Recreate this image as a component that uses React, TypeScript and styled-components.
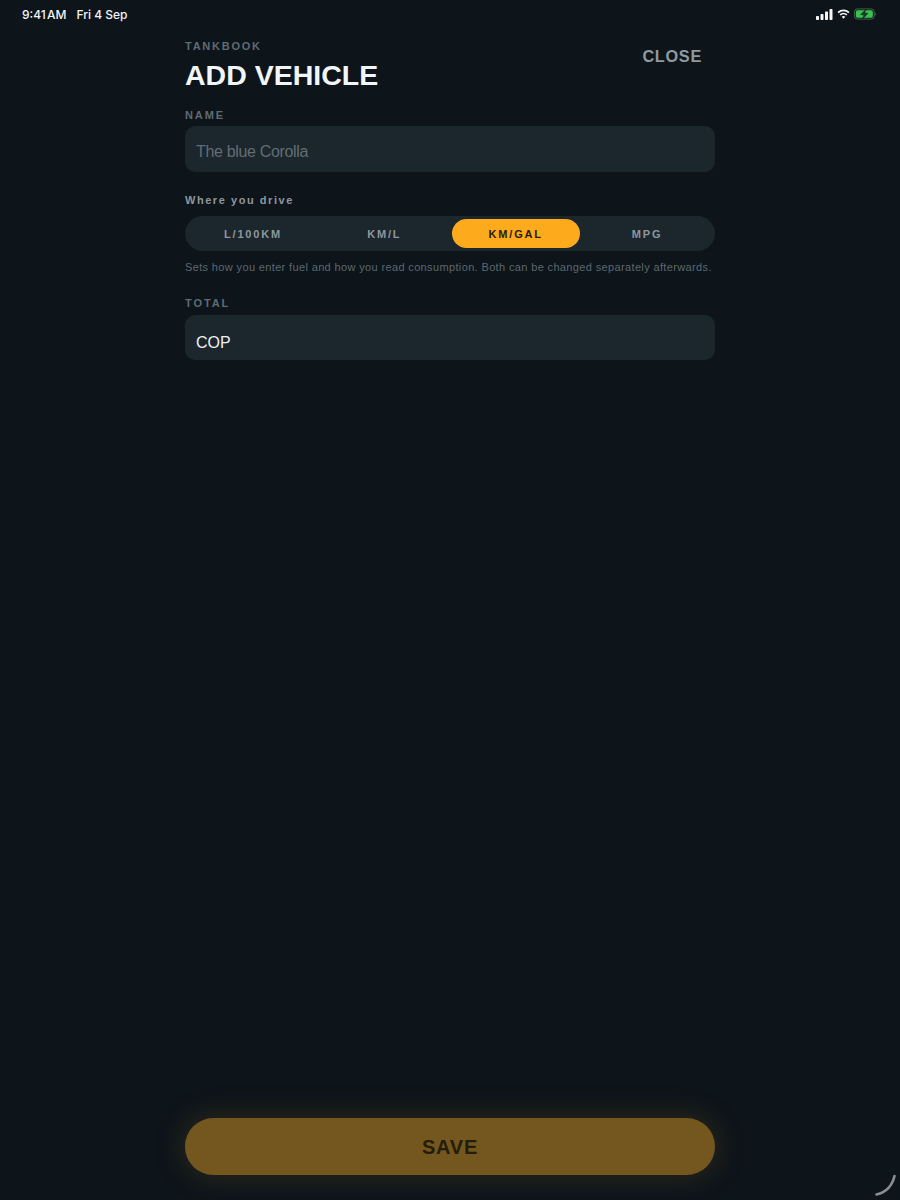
import React from "react";
import styled, { createGlobalStyle } from "styled-components";

const GlobalStyle = createGlobalStyle`
  html, body {
    margin: 0;
    padding: 0;
    background: #0d141a;
  }
  * {
    box-sizing: border-box;
  }
`;

const Page = styled.div`
  position: relative;
  display: flex;
  flex-direction: column;
  height: 1200px;
  overflow: hidden;
  background: #0d141a;
  font-family: "Liberation Sans", Arial, sans-serif;
`;

const StatusBar = styled.div`
  display: flex;
  justify-content: space-between;
  align-items: center;
  height: 28px;
  padding: 0 23px 0 22px;
  color: #f2f4f5;
  font-family: Inter, sans-serif;
  font-size: 12px;
  font-weight: 500;
`;

const StatusLeft = styled.div`
  display: flex;
  gap: 10px;
`;

const Clock = styled.span`
  word-spacing: -2px;
`;

const StatusRight = styled.div`
  display: flex;
  align-items: center;
  gap: 4px;
`;

const Sheet = styled.main`
  display: flex;
  flex-direction: column;
  flex: 1;
  width: 530px;
  margin: 0 auto;
`;

const Header = styled.header`
  display: flex;
  justify-content: space-between;
  align-items: flex-start;
  padding-top: 12px;
`;

const Eyebrow = styled.div`
  color: #5f6b72;
  font-size: 11px;
  font-weight: 700;
  letter-spacing: 1.75px;
  line-height: 13px;
`;

const Title = styled.h1`
  margin: 5px 0 0;
  color: #f1f6f9;
  font-size: 28.5px;
  font-weight: 700;
  line-height: 34px;
`;

const CloseButton = styled.button`
  margin: 6px 13px 0 0;
  padding: 0;
  border: 0;
  background: none;
  color: #8f9a9f;
  font-family: inherit;
  font-size: 16.3px;
  font-weight: 700;
  letter-spacing: 0.7px;
  line-height: 20px;
`;

const FieldLabel = styled.label<{ $top: number; $gap: number }>`
  display: block;
  margin: ${(p) => p.$top}px 0 ${(p) => p.$gap}px;
  color: #5f6b72;
  font-size: 11px;
  font-weight: 700;
  letter-spacing: 1.9px;
  line-height: 13px;
`;

const Field = styled.div<{ $height: number; $drop: number }>`
  display: flex;
  align-items: center;
  height: ${(p) => p.$height}px;
  padding: ${(p) => p.$drop}px 11px 0;
  border-radius: 10px;
  background: #1c262d;
`;

const FieldText = styled.span<{ $filled?: boolean }>`
  color: ${(p) => (p.$filled ? "#eef2f4" : "#626d74")};
  font-size: 16px;
  letter-spacing: ${(p) => (p.$filled ? "0" : "-0.33px")};
  line-height: 20px;
`;

const SectionLabel = styled.div`
  margin: 22px 0 9px;
  color: #8f979b;
  font-size: 11px;
  font-weight: 700;
  letter-spacing: 1.55px;
  line-height: 13px;
`;

const Segments = styled.div`
  display: grid;
  grid-template-columns: repeat(4, 1fr);
  gap: 3.5px;
  height: 35px;
  padding: 3px 4px;
  border-radius: 18px;
  background: #1c262d;
`;

const Segment = styled.button<{ $active?: boolean }>`
  padding: 0;
  border: 0;
  border-radius: 15px;
  background: ${(p) => (p.$active ? "#fdab1c" : "transparent")};
  color: ${(p) => (p.$active ? "#2a1b04" : "#8d979c")};
  font-family: inherit;
  font-size: 11px;
  font-weight: 700;
  letter-spacing: 1.8px;
`;

const Hint = styled.p`
  margin: 9px 0 0;
  color: #5c686f;
  font-size: 11px;
  letter-spacing: 0.36px;
  line-height: 14px;
  white-space: nowrap;
`;

const Footer = styled.footer`
  margin-top: auto;
  padding-bottom: 25px;
`;

const SaveButton = styled.button`
  display: block;
  width: 100%;
  height: 57px;
  padding: 2px 0 0;
  border: 0;
  border-radius: 29px;
  background: #73571f;
  box-shadow: 0 0 26px 5px rgba(115, 87, 31, 0.26);
  color: #251c0b;
  font-family: inherit;
  font-size: 20px;
  font-weight: 700;
  letter-spacing: 0.8px;
`;

const Scribble = styled.svg`
  position: absolute;
  right: 0;
  bottom: 0;
`;

const SignalIcon = () => (
  <svg width="17" height="11" viewBox="0 0 17 11" fill="#f4f6f7">
    <rect x="0" y="7" width="3" height="4" rx="0.7" />
    <rect x="4.5" y="5" width="3" height="6" rx="0.7" />
    <rect x="9" y="2.5" width="3" height="8.5" rx="0.7" />
    <rect x="13.5" y="0" width="3" height="11" rx="0.7" />
  </svg>
);

const WifiIcon = () => (
  <svg width="13" height="10" viewBox="0 0 14 11" fill="none" stroke="#f4f6f7" strokeWidth="1.9">
    <path d="M1 4 A8.6 8.6 0 0 1 13 4" />
    <path d="M3.3 6.5 A5.4 5.4 0 0 1 10.7 6.5" />
    <path d="M7 10.8 L5 8.6 A2.8 2.8 0 0 1 9 8.6 Z" fill="#f4f6f7" stroke="none" />
  </svg>
);

const BatteryIcon = () => (
  <svg width="23" height="12" viewBox="0 0 25 12">
    <rect x="0.5" y="0.5" width="21.5" height="11" rx="3.2" fill="none" stroke="#4c6a52" />
    <rect x="2" y="2" width="18.5" height="8" rx="1.8" fill="#38c24f" />
    <path d="M23 4 C24.2 4.3 24.2 7.7 23 8 Z" fill="#4c6a52" />
    <path d="M13 0.6 L7 6.9 H10.6 L9.4 11.4 L15.4 5.1 H11.8 Z" fill="#1f3a25" stroke="#0d141a" strokeWidth="0.4" />
  </svg>
);

const units = ["L/100KM", "KM/L", "KM/GAL", "MPG"];

export default function App() {
  return (
    <>
      <GlobalStyle />
      <Page>
        <StatusBar>
          <StatusLeft>
            <Clock>9:41 AM</Clock>
            <span>Fri 4 Sep</span>
          </StatusLeft>
          <StatusRight>
            <SignalIcon />
            <WifiIcon />
            <BatteryIcon />
          </StatusRight>
        </StatusBar>
        <Sheet>
          <Header>
            <div>
              <Eyebrow>TANKBOOK</Eyebrow>
              <Title>ADD VEHICLE</Title>
            </div>
            <CloseButton>CLOSE</CloseButton>
          </Header>

          <FieldLabel $top={17} $gap={4}>NAME</FieldLabel>
          <Field $height={46} $drop={5}>
            <FieldText>The blue Corolla</FieldText>
          </Field>

          <SectionLabel>Where you drive</SectionLabel>
          <Segments>
            {units.map((unit) => (
              <Segment key={unit} $active={unit === "KM/GAL"}>
                {unit}
              </Segment>
            ))}
          </Segments>
          <Hint>
            Sets how you enter fuel and how you read consumption. Both can be changed separately afterwards.
          </Hint>

          <FieldLabel $top={23} $gap={5}>TOTAL</FieldLabel>
          <Field $height={45} $drop={10}>
            <FieldText $filled>COP</FieldText>
          </Field>

          <Footer>
            <SaveButton>SAVE</SaveButton>
          </Footer>
        </Sheet>
        <Scribble width="60" height="50" viewBox="0 0 60 50" fill="none">
          <path d="M36.5 44.5 C45 42.5 52 37 54.5 26" stroke="#8a8f92" strokeWidth="2.6" strokeLinecap="round" />
        </Scribble>
      </Page>
    </>
  );
}
